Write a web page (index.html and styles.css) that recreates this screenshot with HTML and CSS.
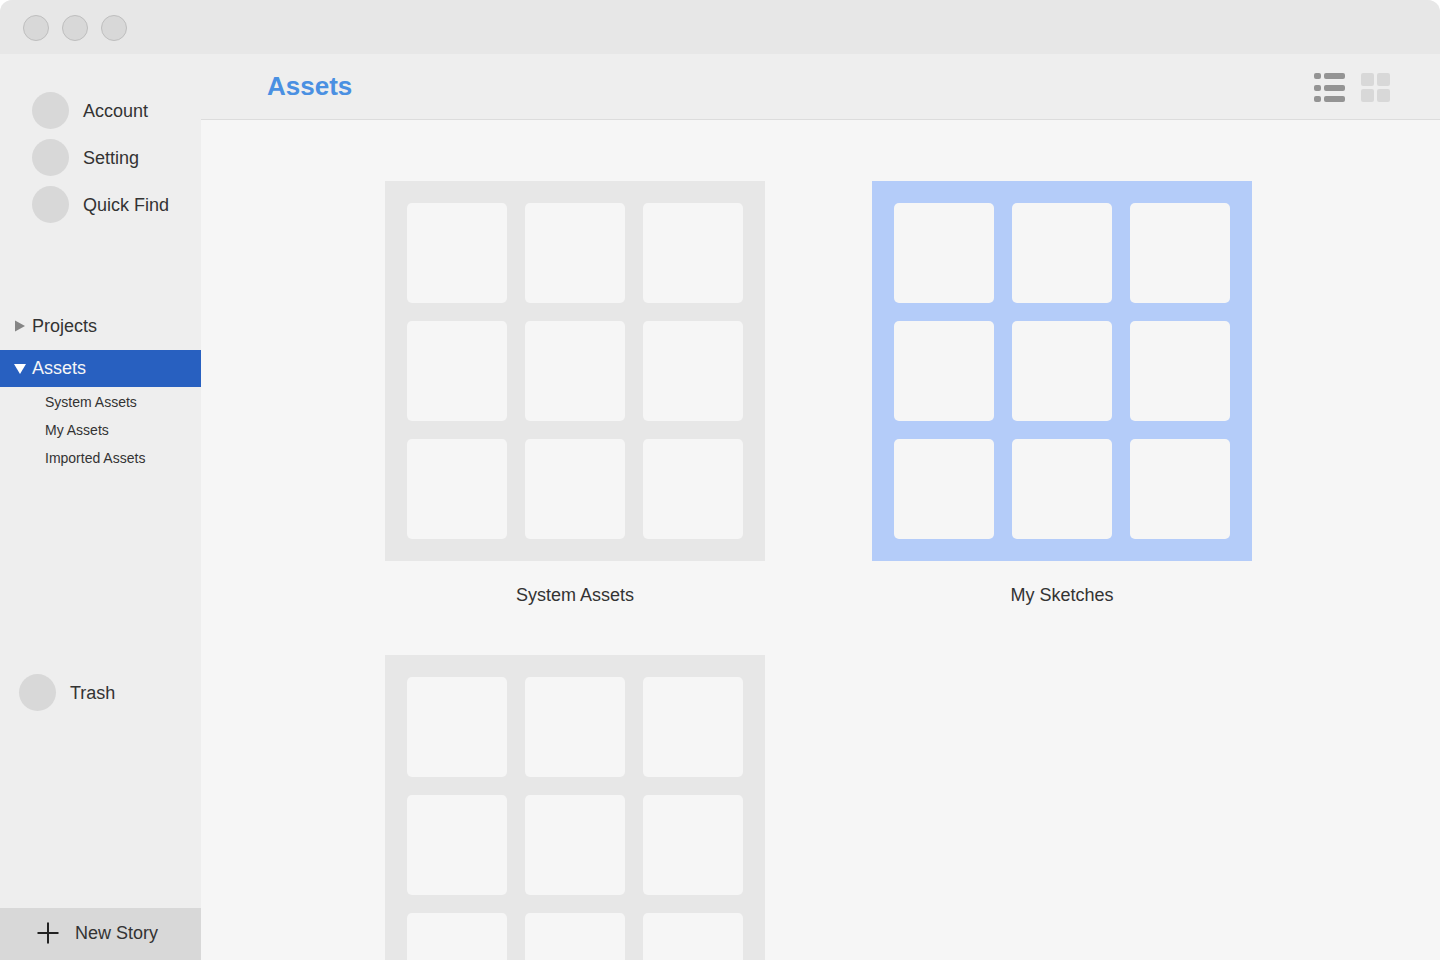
FILE: index.html
```html
<!DOCTYPE html>
<html lang="en">
<head>
<meta charset="utf-8">
<meta name="viewport" content="width=device-width, initial-scale=1">
<title>Assets</title>
<link rel="stylesheet" href="styles.css">
</head>
<body>
<div class="window">
  <div class="titlebar">
    <button class="light" type="button" aria-label="Close"></button>
    <button class="light" type="button" aria-label="Minimize"></button>
    <button class="light" type="button" aria-label="Zoom"></button>
  </div>
  <div class="body">
    <aside class="sidebar">
      <nav class="shortcuts">
        <a class="shortcut" href="#account"><span class="avatar"></span>Account</a>
        <a class="shortcut" href="#setting"><span class="avatar"></span>Setting</a>
        <a class="shortcut" href="#find"><span class="avatar"></span>Quick Find</a>
      </nav>
      <nav class="tree">
        <button class="branch" type="button" aria-expanded="false">
          <svg class="arrow" width="12" height="12" viewBox="0 0 12 12"><path d="M1 0.5 11 6 1 11.5Z"/></svg>Projects
        </button>
        <button class="branch selected" type="button" aria-expanded="true">
          <svg class="arrow" width="12" height="12" viewBox="0 0 12 12"><path d="M0 2H12L6 12Z"/></svg>Assets
        </button>
        <ul class="leaves">
          <li><a href="#system">System Assets</a></li>
          <li><a href="#mine">My Assets</a></li>
          <li><a href="#imported">Imported Assets</a></li>
        </ul>
      </nav>
      <a class="shortcut trash" href="#trash"><span class="avatar"></span>Trash</a>
      <button class="new-story" type="button">
        <svg width="22" height="22" viewBox="0 0 22 22"><path d="M11 0.5V21.5M0.5 11H21.5" stroke="#222" stroke-width="2"/></svg>New Story
      </button>
    </aside>
    <main class="main">
      <header class="toolbar">
        <h1 class="title">Assets</h1>
        <div class="views">
          <button class="view" type="button" aria-label="List view">
            <svg width="31" height="29" viewBox="0 0 31 29" fill="#949494"><rect width="7" height="6" rx="2"/><rect x="10" width="21" height="6" rx="2"/><rect y="12" width="7" height="6" rx="2"/><rect x="10" y="12" width="21" height="6" rx="2"/><rect y="23" width="7" height="6" rx="2"/><rect x="10" y="23" width="21" height="6" rx="2"/></svg>
          </button>
          <button class="view" type="button" aria-label="Grid view">
            <svg width="29" height="29" viewBox="0 0 29 29" fill="#d8d8d8"><rect width="13" height="13" rx="2"/><rect x="16" width="13" height="13" rx="2"/><rect y="16" width="13" height="13" rx="2"/><rect x="16" y="16" width="13" height="13" rx="2"/></svg>
          </button>
        </div>
      </header>
      <div class="gallery">
        <a class="card" href="#system">
          <span class="tiles"><i></i><i></i><i></i><i></i><i></i><i></i><i></i><i></i><i></i></span>
          <span class="caption">System Assets</span>
        </a>
        <a class="card active" href="#sketches">
          <span class="tiles"><i></i><i></i><i></i><i></i><i></i><i></i><i></i><i></i><i></i></span>
          <span class="caption">My Sketches</span>
        </a>
        <a class="card" href="#imported" aria-label="Asset collection">
          <span class="tiles"><i></i><i></i><i></i><i></i><i></i><i></i><i></i><i></i><i></i></span>
        </a>
      </div>
    </main>
  </div>
</div>
</body>
</html>
```

FILE: styles.css
```css
* {
  box-sizing: border-box;
}

body {
  margin: 0;
  background: #fff;
  color: #333;
  font: 18px/24px "Liberation Sans", Arial, sans-serif;
}

a {
  color: inherit;
  text-decoration: none;
}

button {
  margin: 0;
  padding: 0;
  border: 0;
  background: none;
  color: inherit;
  font: inherit;
  text-align: left;
}

svg {
  display: block;
  flex: none;
}

.window {
  display: flex;
  flex-direction: column;
  height: 100vh;
  overflow: hidden;
  border-radius: 12px 12px 0 0;
  background: #f6f6f6;
}

.titlebar {
  display: flex;
  flex: none;
  gap: 13px;
  padding: 15px 23px 13px;
  background: #e7e7e7;
}

.light {
  width: 26px;
  height: 26px;
  border: 1px solid #bebebe;
  border-radius: 50%;
  background: #d8d8d8;
}

.body {
  display: flex;
  flex: 1;
  min-height: 0;
}

.sidebar {
  display: flex;
  flex: none;
  flex-direction: column;
  width: 201px;
  background: #eee;
}

.shortcuts {
  display: flex;
  flex-direction: column;
  gap: 10px;
  padding: 38px 0 0 32px;
}

.shortcut {
  display: flex;
  align-items: center;
  gap: 14px;
}

.avatar {
  width: 37px;
  height: 37px;
  border-radius: 50%;
  background: #d8d8d8;
}

.tree {
  display: flex;
  flex-direction: column;
  gap: 5px;
  margin-top: 85px;
}

.branch {
  display: flex;
  align-items: center;
  gap: 6px;
  height: 37px;
  padding: 0 0 2px 14px;
}

.arrow {
  fill: #858585;
}

.selected {
  background: #2860c0;
  color: #f6f6f6;
}

.selected .arrow {
  fill: #fff;
}

.leaves {
  margin: -4px 0 0;
  padding: 0 0 0 45px;
  list-style: none;
  font-size: 14px;
  line-height: 28px;
}

.trash {
  margin-top: 202px;
  padding-left: 19px;
}

.new-story {
  display: flex;
  align-items: center;
  gap: 16px;
  height: 52px;
  margin-top: auto;
  padding: 0 0 2px 37px;
  background: #d8d8d8;
}

.main {
  display: flex;
  flex: 1;
  flex-direction: column;
  min-width: 0;
}

.toolbar {
  display: flex;
  flex: none;
  align-items: center;
  justify-content: space-between;
  height: 66px;
  padding: 0 50px 0 66px;
  border-bottom: 1px solid #dcdcdc;
  background: #eee;
}

.title {
  margin: 0;
  padding-bottom: 2px;
  color: #4a90e2;
  font-size: 26px;
  line-height: 32px;
}

.views {
  display: flex;
  gap: 16px;
  padding-top: 2px;
}

.gallery {
  display: grid;
  flex: 1;
  grid-template-columns: repeat(auto-fit, 380px);
  align-content: start;
  justify-content: center;
  gap: 26px 107px;
  min-height: 0;
  padding: 61px 64px 61px 60px;
  overflow-y: auto;
  scrollbar-width: none;
}

.card {
  display: flex;
  flex-direction: column;
}

.tiles {
  display: grid;
  grid-template-columns: repeat(3, 1fr);
  gap: 18px;
  padding: 22px;
  background: #e7e7e7;
}

.tiles i {
  aspect-ratio: 1;
  border-radius: 5px;
  background: #f6f6f6;
}

.active .tiles {
  background: #b4ccf9;
}

.caption {
  line-height: 68px;
  text-align: center;
}
```
